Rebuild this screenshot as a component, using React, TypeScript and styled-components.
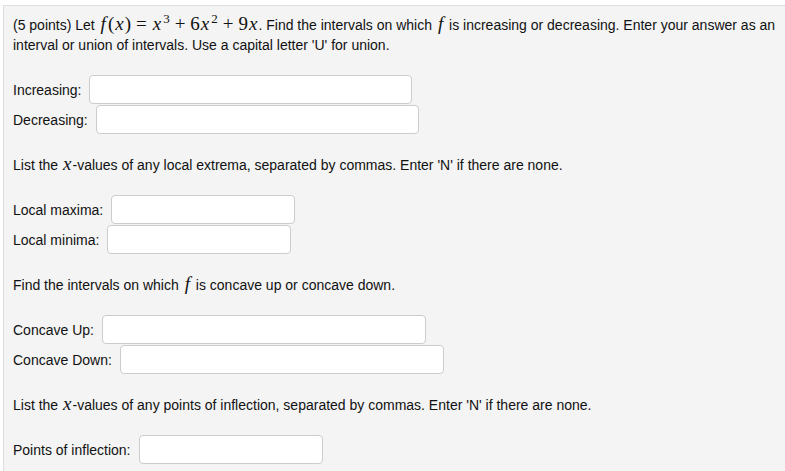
import React from 'react'
import styled, { createGlobalStyle } from 'styled-components'

const GlobalStyle = createGlobalStyle`
  body {
    margin: 0;
    background: #fff;
    font-family: "Liberation Sans", Arial, sans-serif;
    font-size: 14px;
    color: #111;
  }
`

const Page = styled.div`
  padding: 5px 0 0 3px;
  height: 466px;
  overflow: hidden;
`

const Panel = styled.div`
  width: 820px;
  min-height: 480px;
  background: #f4f4f4;
  border-top: 1px solid #dedede;
  border-left: 1px solid #dedede;
  padding: 9px 0 20px 9px;
  display: flex;
  flex-direction: column;
  gap: 20px;
`

const Prompt = styled.p`
  margin: 0;
  line-height: 20px;
`

const serif = `"Liberation Serif", "Times New Roman", serif`

const Mi = styled.span<{ $pl?: number; $pr?: number }>`
  font-family: ${serif};
  font-style: italic;
  font-size: 19px;
  line-height: 0;
  padding: 0 ${p => p.$pr ?? 1}px 0 ${p => p.$pl ?? 1}px;
`

const Mn = styled.span`
  font-family: ${serif};
  font-size: 19px;
  line-height: 0;
`

const Mo = styled(Mn)`
  margin: 0 5px;
`

const Sup = styled.span`
  font-family: ${serif};
  font-size: 13px;
  position: relative;
  top: -7px;
  line-height: 0;
  margin-left: 1px;
`

const Fields = styled.div`
  display: flex;
  flex-direction: column;
`

const Row = styled.label`
  display: flex;
  align-items: center;
  gap: 8px;
  height: 30px;
`

const Input = styled.input<{ $w: number }>`
  width: ${p => p.$w}px;
  height: 29px;
  box-sizing: border-box;
  border: 1px solid #cccccc;
  border-radius: 4px;
  background: #fff;
  margin: 0 0 1px;
  padding: 4px 6px;
  font: inherit;
`

const Field = ({ label, w }: { label: string; w: number }) => (
  <Row>
    <span>{label}</span>
    <Input $w={w} type="text" />
  </Row>
)

const X = () => <Mi>x</Mi>
const F = () => (
  <Mi $pl={2} $pr={2}>
    f
  </Mi>
)

export default function App() {
  return (
    <>
      <GlobalStyle />
      <Page>
        <Panel>
          <Prompt>
            (5 points) Let <F />
            <Mn>(</Mn>
            <X />
            <Mn>)</Mn>
            <Mo>=</Mo>
            <X />
            <Sup>3</Sup>
            <Mo>+</Mo>
            <Mn>6</Mn>
            <X />
            <Sup>2</Sup>
            <Mo>+</Mo>
            <Mn>9</Mn>
            <X />. Find the intervals on which <F /> is increasing or decreasing. Enter your answer as an
            <br />
            interval or union of intervals. Use a capital letter 'U' for union.
          </Prompt>
          <Fields>
            <Field label="Increasing:" w={323} />
            <Field label="Decreasing:" w={323} />
          </Fields>
          <Prompt>
            List the <X />-values of any local extrema, separated by commas. Enter 'N' if there are none.
          </Prompt>
          <Fields>
            <Field label="Local maxima:" w={184} />
            <Field label="Local minima:" w={184} />
          </Fields>
          <Prompt>
            Find the intervals on which <F /> is concave up or concave down.
          </Prompt>
          <Fields>
            <Field label="Concave Up:" w={324} />
            <Field label="Concave Down:" w={324} />
          </Fields>
          <Prompt>
            List the <X />-values of any points of inflection, separated by commas. Enter 'N' if there are none.
          </Prompt>
          <Fields>
            <Field label="Points of inflection:" w={184} />
          </Fields>
        </Panel>
      </Page>
    </>
  )
}
